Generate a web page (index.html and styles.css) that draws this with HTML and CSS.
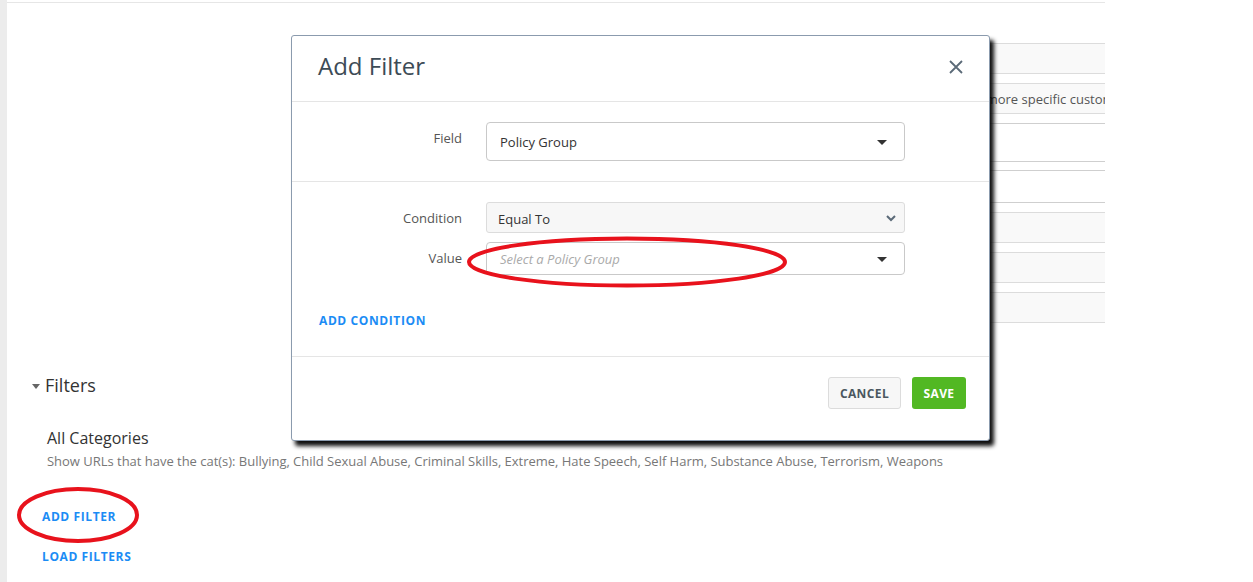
FILE: index.html
```html
<!DOCTYPE html>
<html>
<head>
<meta charset="utf-8">
<link rel="stylesheet" href="styles.css">
</head>
<body>
<div class="page">
  <div class="sidebar"></div>
  <div class="main">
    <div class="bgform">
      <div class="bgrow shaded r1"></div>
      <div class="bgrow shaded r2"><span class="bgtext">Use this to narrow results down to a more specific customer group</span></div>
      <div class="bgrow r3"></div>
      <div class="bgrow r4"></div>
      <div class="bgrow shaded r5"></div>
      <div class="bgrow shaded r6"></div>
      <div class="bgrow shaded r7"></div>
    </div>
    <div class="filters">
      <div class="filters-head"><span class="caret-down"></span>Filters</div>
      <div class="cat-title">All Categories</div>
      <div class="cat-desc">Show URLs that have the cat(s): Bullying, Child Sexual Abuse, Criminal Skills, Extreme, Hate Speech, Self Harm, Substance Abuse, Terrorism, Weapons</div>
      <div class="link add-filter">ADD FILTER</div>
      <div class="link load-filters">LOAD FILTERS</div>
    </div>
  </div>
</div>

<div class="modal">
  <div class="modal-header">
    <div class="modal-title">Add Filter</div>
    <svg class="close" width="14" height="14" viewBox="0 0 14 14"><path d="M1 1 L13 13 M13 1 L1 13" stroke="#5b6a78" stroke-width="1.8" fill="none"/></svg>
  </div>
  <div class="section field-section">
    <div class="form-row">
      <label class="lbl">Field</label>
      <div class="select">Policy Group<span class="tri"></span></div>
    </div>
  </div>
  <div class="section cond-section">
    <div class="form-row">
      <label class="lbl lbl-cond">Condition</label>
      <div class="select native">Equal To<svg class="chev" width="10" height="7" viewBox="0 0 10 7"><path d="M1 1 L5 5 L9 1" stroke="#5b6a78" stroke-width="2" fill="none"/></svg></div>
    </div>
    <div class="form-row row-value">
      <label class="lbl lbl-value">Value</label>
      <div class="select value"><span class="placeholder">Select a Policy Group</span><span class="tri"></span></div>
    </div>
    <div class="link add-cond">ADD CONDITION</div>
  </div>
  <div class="modal-footer">
    <div class="btn cancel">CANCEL</div>
    <div class="btn save">SAVE</div>
  </div>
</div>

<svg class="marks" width="1253" height="582" viewBox="0 0 1253 582">
  <ellipse cx="78" cy="515" rx="59" ry="26" fill="none" stroke="#e8121c" stroke-width="4"/>
  <ellipse cx="627" cy="262" rx="158" ry="23.5" fill="none" stroke="#e8121c" stroke-width="4"/>
</svg>
</body>
</html>
```
FILE: styles.css
```css
* { box-sizing: border-box; }
html, body { margin: 0; padding: 0; }
body {
  font-family: "Open Sans", "Noto Sans", sans-serif;
  color: #333;
  background: #fff;
  width: 1253px;
  height: 582px;
  overflow: hidden;
  position: relative;
}
.page { display: flex; height: 582px; }
.sidebar { width: 7px; background: #ececec; flex: none; }
.main {
  width: 1098px;
  flex: none;
  margin-top: 2px;
  border-top: 1px solid #e6e6e6;
}
.bgform { padding-top: 40px; padding-left: 600px; }
.bgrow {
  height: 31px;
  border-top: 1px solid #dcdcdc;
  border-bottom: 1px solid #dcdcdc;
  margin-bottom: 9px;
  overflow: hidden;
  white-space: nowrap;
}
.bgrow.shaded { background: #f9f9f9; }
.bgrow.r3 { height: 39px; border-color: #cfcfcf; margin-bottom: 8px; }
.bgrow.r4 { height: 33px; border-color: #cfcfcf; }
.bgtext {
  display: block;
  font-size: 13px;
  color: #555;
  line-height: 30px;
  padding-left: 156px;
}
.filters { padding-left: 25px; padding-top: 41px; }
.filters-head {
  font-size: 18px;
  color: #333;
  display: flex;
  align-items: center;
  line-height: 24px;
}
.caret-down {
  width: 0; height: 0;
  border-left: 4.5px solid transparent;
  border-right: 4.5px solid transparent;
  border-top: 5px solid #666;
  margin-right: 5px;
  margin-top: 2px;
}
.cat-title {
  font-size: 16px;
  color: #333;
  padding-left: 15px;
  margin-top: 30px;
  line-height: 22px;
}
.cat-desc {
  font-size: 13px;
  color: #777;
  padding-left: 15px;
  line-height: 18px;
  margin-top: 3px;
  white-space: nowrap;
  letter-spacing: -0.02px;
}
.link {
  font-size: 12px;
  font-weight: 700;
  color: #1b8cf5;
  letter-spacing: 0.6px;
  line-height: 16px;
}
.add-filter { padding-left: 10px; margin-top: 39px; }
.load-filters { padding-left: 10px; margin-top: 24px; }

.modal {
  position: absolute;
  left: 291px;
  top: 35px;
  width: 699px;
  height: 406px;
  background: #fff;
  border: 1px solid #8b9bae;
  border-radius: 3px;
  box-shadow: 4px 5px 4px rgba(0,0,0,0.95);
  z-index: 2;
}
.modal-header {
  height: 66px;
  border-bottom: 1px solid #e5e5e5;
  display: flex;
  align-items: center;
  justify-content: space-between;
  padding: 0 26px 0 26px;
}
.modal-title {
  font-size: 24px;
  color: #3d4b56;
  line-height: 30px;
  margin-top: -5px;
}
.close { margin-top: -3px; }
.section { border-bottom: 1px solid #e5e5e5; }
.field-section { padding: 20px 0 20px 0; }
.form-row {
  display: grid;
  grid-template-columns: 170px 419px;
  column-gap: 24px;
}
.lbl {
  text-align: right;
  font-size: 13px;
  color: #555;
  padding-top: 7px;
  line-height: 18px;
}
.select {
  height: 39px;
  border: 1px solid #c9c9c9;
  border-radius: 4px;
  font-size: 13px;
  color: #333;
  padding-left: 13px;
  display: flex;
  align-items: center;
  justify-content: space-between;
  padding-right: 17px;
  padding-top: 1px;
}
.tri {
  width: 0; height: 0;
  border-left: 5px solid transparent;
  border-right: 5px solid transparent;
  border-top: 5px solid #333;
}
.cond-section { padding: 20px 0 0 0; height: 175px; }
.select.native {
  height: 31px;
  background: #f7f7f7;
  border-color: #dcdcdc;
  border-radius: 3px;
  padding-left: 11px;
  padding-right: 8px;
  padding-top: 2px;
}
.lbl-cond { padding-top: 7px; }
.row-value { margin-top: 9px; }
.select.value { height: 33px; }
.lbl-value { padding-top: 7px; }
.placeholder { font-style: italic; color: #aaa; }
.add-cond { margin-left: 27px; margin-top: 38px; }
.modal-footer {
  display: flex;
  justify-content: flex-end;
  gap: 11px;
  padding: 20px 23px 0 0;
}
.btn {
  height: 32px;
  font-size: 12px;
  font-weight: 700;
  letter-spacing: 0.4px;
  display: flex;
  align-items: center;
  justify-content: center;
  border-radius: 3px;
}
.cancel {
  width: 73px;
  background: #f7f7f7;
  border: 1px solid #dcdcdc;
  color: #4b5760;
}
.save {
  width: 54px;
  background: #52b823;
  color: #fff;
}
.marks {
  position: absolute;
  left: 0; top: 0;
  z-index: 5;
  pointer-events: none;
}
```
